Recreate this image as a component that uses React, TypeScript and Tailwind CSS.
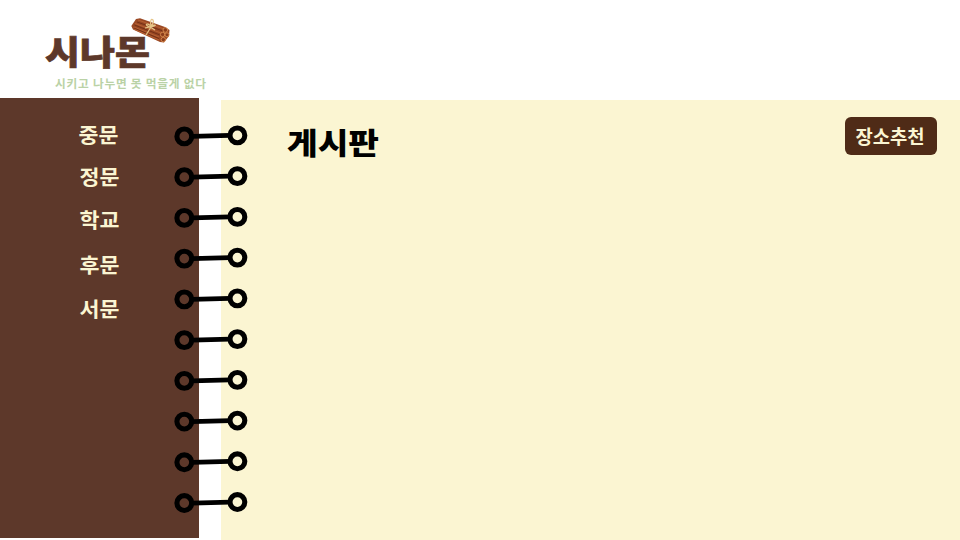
const places = [
  { name: "중문", cls: "h-[43px] pr-[2px]" },
  { name: "정문", cls: "h-[42px]" },
  { name: "학교", cls: "h-[44px]" },
  { name: "후문", cls: "h-[45px]" },
  { name: "서문", cls: "h-[43px]" },
];

const rings = Array.from({ length: 10 }, (_, i) => 38.4 + i * 40.74);

function Cinnamon() {
  return (
    <svg className="absolute left-[130px] top-[17px]" width="41" height="28" viewBox="0 0 41 28">
      <path d="M6 2 L10 1.2 L35 10 L39.5 13 L39 19 L34 25.5 L30 25 L3 12.5 L1.3 9 Z" fill="#9a4824" />
      <path d="M8 3 L34 12 M5 6.5 L31 16 M3.5 10 L29 20 M4 12 L29 23" stroke="#b56033" strokeWidth="1.1" />
      <path d="M7 5 L33 14 M4.5 8 L30 18 M4 11 L29 21.5" stroke="#6b2b13" strokeWidth="0.8" />
      <g fill="#8a3c1b" stroke="#d78b4e" strokeWidth="0.9">
        <circle cx="35.3" cy="13" r="2.3" />
        <circle cx="32.6" cy="17.5" r="2.2" />
        <circle cx="37" cy="17.8" r="2" />
        <circle cx="33.3" cy="22.6" r="2.2" />
      </g>
      <path d="M21 9 C20 4 21 1 23 3 C24 5 22 8 21 9 C16 5 14 8 20 10 C27 6 27 9 21 10 L16 18 M15 11 L20 10 L25 13" fill="none" stroke="#e5c487" strokeWidth="1.2" />
    </svg>
  );
}

function Binding() {
  return (
    <svg className="absolute left-[170px] top-0" width="82" height="440" viewBox="0 0 82 440" fill="none" stroke="#000">
      {rings.map((y) => (
        <g key={y}>
          <path d={`M22 ${y} L60 ${y - 1}`} strokeWidth="4.8" />
          <circle cx="14.3" cy={y} r="7.4" strokeWidth="5.1" />
          <circle cx="67.4" cy={y - 1} r="7.4" strokeWidth="5.1" />
        </g>
      ))}
    </svg>
  );
}

export default function App() {
  return (
    <div className="flex h-[540px] w-[960px] flex-col overflow-hidden bg-white font-['Noto_Sans_CJK_KR',sans-serif]">
      <header className="relative flex h-[98px] shrink-0 flex-col items-start">
        <h1 className="ml-[45px] mt-[34px] h-[38px] origin-top scale-y-[0.89] whitespace-nowrap text-[38px] font-black leading-[38px] text-[#5d382a] [-webkit-text-stroke:0.8px_#5d382a]">시나몬</h1>
        <p className="ml-[55px] mt-[3px] whitespace-nowrap text-[11.7px] font-bold leading-[16px] tracking-[0.75px] text-[#bad2a6]">시키고 나누면 못 먹을게 없다</p>
        <Cinnamon />
      </header>
      <div className="relative flex grow">
        <nav className="mb-[2px] flex w-[199px] flex-col items-center bg-[#5d382a] pt-[14px] text-[21.7px] font-bold text-[#fbf5d2]">
          {places.map((p) => (
            <a key={p.name} className={`flex origin-center scale-y-[0.96] items-center leading-none ${p.cls}`}>{p.name}</a>
          ))}
        </nav>
        <main className="ml-[22px] mt-[2px] flex grow items-start justify-between bg-[#fbf5d2] pl-[66px] pr-[23px]">
          <h2 className="mt-[25px] origin-top scale-y-[0.9] whitespace-nowrap text-[33.3px] font-black leading-[36px] text-black">게시판</h2>
          <button className="mt-[17px] flex h-[38px] w-[92px] items-center justify-center whitespace-nowrap rounded-[6px] bg-[#4f2b17] pr-[2px] text-[18.8px] font-bold leading-none text-[#fbf5d2]">장소추천</button>
        </main>
        <Binding />
      </div>
    </div>
  );
}
